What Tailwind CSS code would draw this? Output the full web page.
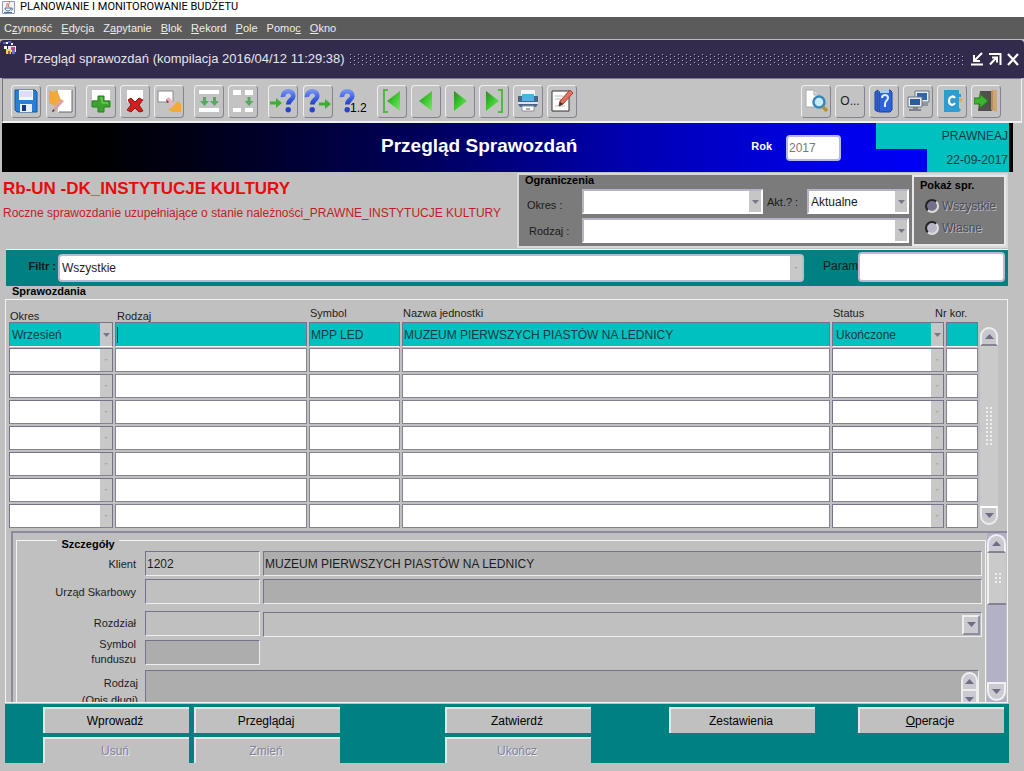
<!DOCTYPE html>
<html lang="pl">
<head>
<meta charset="utf-8">
<title>PLANOWANIE I MONITOROWANIE BUDŻETU</title>
<script src="https://cdn.jsdelivr.net/npm/@tailwindcss/browser@4"></script>
</head>
<body class="min-h-screen bg-[#c0c0c0] font-['Liberation_Sans',Arial,sans-serif] text-[12px] leading-[14px] text-[#1c1c1c]">

<!-- shared symbols -->
<svg class="absolute size-0" aria-hidden="true">
  <symbol id="down" viewBox="0 0 9 5"><path d="M0 0h9L4.5 5z" fill="currentColor"/></symbol>
  <symbol id="up" viewBox="0 0 9 5"><path d="M0 5h9L4.5 0z" fill="currentColor"/></symbol>
  <linearGradient id="blueg" gradientUnits="userSpaceOnUse" x1="0" y1="0" x2="0" y2="18"><stop offset="0" stop-color="#7f9af4"/><stop offset=".5" stop-color="#3c62e6"/><stop offset="1" stop-color="#1c33b0"/></linearGradient>
  <linearGradient id="greeng" x1="0" y1="0" x2="1" y2="1"><stop offset="0" stop-color="#2b8a22"/><stop offset=".5" stop-color="#3fc832"/><stop offset="1" stop-color="#7be866"/></linearGradient>
  <symbol id="question" viewBox="0 0 16 24"><path d="M3 8C2.500 0.500 14 0.500 13.200 7.500C12.800 11 8.300 11 8.300 15.500" fill="none" stroke="url(#blueg)" stroke-width="4.600"/><circle cx="8.200" cy="20.800" r="2.700" fill="#2844c8"/></symbol>
  <symbol id="arrow" viewBox="0 0 12 10"><path d="M0 3.500h6V0l6 5-6 5V6.500H0z" fill="#3fae34"/></symbol>
</svg>

<header>
  <div class="flex h-[17px] items-center gap-[5px] bg-white pb-[3px] pl-[2px] font-[Roboto,'Open_Sans',sans-serif] text-[11px] leading-[14px] text-black">
    <svg class="size-[13px]" viewBox="0 0 13 13"><path d="M.5 .5h12v12H.5z" fill="#f2f4f8" stroke="#8f9cb4"/><path d="M7 0c2 2-2 3 0 6M5 2c1 2-1 2 0 4" fill="none" stroke="#d6643c"/><path d="M3 7h6c0 4-6 4-6 0M9 7c3 0 2 2 0 2M2 11.500h8" fill="none" stroke="#4e7297"/></svg>
    <span class="whitespace-nowrap">PLANOWANIE I MONITOROWANIE BUDŻETU</span>
  </div>
  <nav class="flex h-[23px] items-center gap-[9px] whitespace-nowrap border-b border-[#b9b9b9] bg-[#5b5b5b] pl-1 text-[11px] text-[#ececec]">
    <a href="#">C<u>z</u>ynność</a><a href="#"><u>E</u>dycja</a><a href="#">Z<u>a</u>pytanie</a><a href="#"><u>B</u>lok</a><a href="#"><u>R</u>ekord</a><a href="#"><u>P</u>ole</a><a href="#">Pomo<u>c</u></a><a href="#"><u>O</u>kno</a>
  </nav>
  <div class="flex h-[38px] items-center rounded-t bg-[#332b4b] pl-[3px] pr-1 text-[#e6e4ee]">
    <svg class="mt-px size-[14px] self-start" viewBox="0 0 14 14"><path d="M0 1h3v2H0zM5 0h3v2H5z" fill="#4a5fe0"/><path d="M3 1h2v2H3zM8 2h2v2H8zM1 5h3v3H1z" fill="#fff"/><path d="M5 5h8v6H5z" fill="#e8e4f4"/><path d="M3 8h5v5H3z" fill="#e6df4d"/><path d="M8 6h4v3H8zM5 10h2v3H5z" fill="#c93fa0"/><path d="M9 9h3v4H9z" fill="#7a68d8"/></svg>
    <h2 class="ml-[7px] whitespace-nowrap text-[13px] leading-4">Przegląd sprawozdań (kompilacja 2016/04/12 11:29:38)</h2>
    <svg class="ml-1 h-[11px] min-w-0 flex-1" aria-hidden="true"><defs><pattern id="dots" width="8" height="4" patternUnits="userSpaceOnUse"><path d="M1 0h1v1H1zM5 2h1v1H5z" fill="#b9b4cc"/><path d="M2 1h1v1H2zM6 3h1v1H6z" fill="#15102a"/></pattern></defs><rect width="100%" height="11" fill="url(#dots)"/></svg>
    <div class="ml-[6px] flex gap-1 text-white">
      <button aria-label="Minimalizuj"><svg class="size-[14px]" viewBox="0 0 14 14" fill="none" stroke="currentColor" stroke-width="2"><path d="M12 1 5 8M4 3v6h6M1 12.500h12"/></svg></button>
      <button aria-label="Przywróć"><svg class="size-[14px]" viewBox="0 0 14 14" fill="none" stroke="currentColor" stroke-width="2"><path d="M1 2h11.500v11M2 12.500 8 6M4 5.500h5v5"/></svg></button>
      <button aria-label="Zamknij"><svg class="size-[14px]" viewBox="0 0 14 14" fill="none" stroke="currentColor" stroke-width="2.200"><path d="m2 2 10 11M12 2 2 13"/></svg></button>
    </div>
  </div>
</header>

<div class="mx-[2px] flex h-[45px] items-center border border-b-2 border-[#f0f0f0] border-l-[#77748a] border-t-[#77748a] bg-[#c3c3c3] pl-2 pr-[20px] pt-[2px]" role="toolbar">
  <div class="flex gap-[5px] *:flex *:h-[33px] *:w-[30px] *:items-center *:justify-center *:rounded-sm *:border *:border-[#eee] *:border-b-[#85838f] *:border-r-[#85838f]">
    <button aria-label="Zapisz"><svg class="size-6" viewBox="0 0 24 24"><path d="M1 1h20l2 2v20H3l-2-2z" fill="#2a7ed4" stroke="#1356a0"/><path d="M5 1h14v10H5z" fill="#f4f6fd"/><path d="M6 3h12M6 5h12M6 7h12" stroke="#c9c6e4"/><path d="M6 15h12v8H6z" fill="#e9eef6"/><path d="M8 16h4v6H8z" fill="#173c7c"/></svg></button>
    <button aria-label="Edytuj rekord"><svg class="size-6" viewBox="0 0 24 24"><path d="M9 1h14v22H9z" fill="#fff"/><path d="M23 1v22H10" fill="none" stroke="#666"/><path d="m0 1 4 2 4-2 4 10-6 6-6-3z" fill="#f2a93c"/><path d="m4 20 8-10 3 2-9 10z" fill="#dba2a4"/><path d="m4 20 2 2-3 1z" fill="#634"/></svg></button>
  </div>
  <div class="ml-[10px] flex gap-[4px] *:flex *:h-[33px] *:w-[30px] *:items-center *:justify-center *:rounded-sm *:border *:border-[#eee] *:border-b-[#85838f] *:border-r-[#85838f]">
    <button aria-label="Dodaj"><svg class="size-6" viewBox="0 0 24 24"><path d="M3 1h18v10H3z" fill="#fff"/><path d="M9 7h6v5h6v6h-6v5H9v-5H3v-6h6z" fill="#3aa52d" stroke="#2a7d22"/><path d="M11 9h2v5h6" fill="none" stroke="#7fdc6c"/></svg></button>
    <button aria-label="Usuń rekord"><svg class="size-6" viewBox="0 0 24 24"><path d="M4 1h16v12H4z" fill="#fff"/><path d="m5 11 3-2 4 4 4-4 4 2-4 5 4 6-4 1-4-4-4 4-4-2 4-5z" fill="#cf2020" stroke="#921414"/></svg></button>
    <button aria-label="Wyczyść"><svg class="size-6" viewBox="0 0 24 24"><path d="M1 2h15v11H1z" fill="#fff" stroke="#888"/><path d="m9 10 3-2 7 8-3 3z" fill="#e9b5bd"/><path d="m9 10 1 4 2-1z" fill="#735"/><path d="m14 19 7-7 3 3v8h-9l-4-3z" fill="#f0ab3c"/></svg></button>
  </div>
  <div class="ml-[10px] flex gap-[4px] *:flex *:h-[33px] *:w-[30px] *:items-center *:justify-center *:rounded-sm *:border *:border-[#eee] *:border-b-[#85838f] *:border-r-[#85838f]">
    <button aria-label="Powiel rekord"><svg class="size-6" viewBox="0 0 24 24"><path d="M2 1h20v4H2zM2 19h20v4H2z" fill="#fff"/><path d="M6 8h3v4h3l-4.500 5L3 12h3zM16 8h3v4h3l-4.500 5-4.500-5h3z" fill="#58a862"/></svg></button>
    <button aria-label="Powiel pole"><svg class="size-6" viewBox="0 0 24 24"><path d="M2 1h8v5H2zM14 1h8v5h-8zM2 19h8v4H2zM14 19h8v4h-8z" fill="#fff"/><path d="M16.500 8h3v4h3L18 17l-4.500-5h3z" fill="#58a862"/></svg></button>
  </div>
  <div class="ml-[10px] flex gap-[5px] *:flex *:h-[33px] *:w-[30px] *:items-center *:justify-center *:rounded-sm *:border *:border-[#eee] *:border-b-[#85838f] *:border-r-[#85838f]">
    <button aria-label="Wprowadź zapytanie"><svg class="h-6 w-[28px]" viewBox="0 0 28 24"><use href="#question" x="11" width="16" height="24"/><use href="#arrow" x="1" y="9" width="12" height="10"/></svg></button>
    <button aria-label="Wykonaj zapytanie"><svg class="h-6 w-[28px]" viewBox="0 0 28 24"><use href="#question" x="0" width="16" height="24"/><use href="#arrow" x="15" y="10" width="12" height="10"/></svg></button>
    <button aria-label="Policz rekordy" class="border-transparent!"><svg class="h-6 w-[28px] shrink-0 overflow-visible" viewBox="0 0 28 24"><use href="#question" x="0" width="16" height="24"/><text x="11" y="23" font-size="12">1.2</text></svg></button>
  </div>
  <div class="ml-[9px] flex gap-[4px] *:flex *:h-[33px] *:w-[30px] *:items-center *:justify-center *:rounded-sm *:border *:border-[#eee] *:border-b-[#85838f] *:border-r-[#85838f]">
    <button aria-label="Pierwszy rekord"><svg class="size-6" viewBox="0 0 24 24"><path d="M8 1H4v22h4" fill="none" stroke="#53b748" stroke-width="2"/><path d="M20 2v20L7 12z" fill="url(#greeng)"/></svg></button>
    <button aria-label="Poprzedni rekord"><svg class="size-6" viewBox="0 0 24 24"><path d="M18 2v20L5 12z" fill="url(#greeng)"/></svg></button>
    <button aria-label="Następny rekord"><svg class="size-6" viewBox="0 0 24 24"><path d="M6 2v20l13-10z" fill="url(#greeng)"/></svg></button>
    <button aria-label="Ostatni rekord"><svg class="size-6" viewBox="0 0 24 24"><path d="M16 1h4v22h-4" fill="none" stroke="#53b748" stroke-width="2"/><path d="M4 2v20l13-10z" fill="url(#greeng)"/></svg></button>
    <button aria-label="Drukuj"><svg class="size-6" viewBox="0 0 24 24"><path d="M5 1h14v6H5z" fill="#eef4fa"/><path d="M2 7h4v5h12V7h4v8l-2 3H4l-2-3z" fill="#4b6488"/><path d="M6 5h12v7H6z" fill="#49b4e4"/><path d="M2 13h20v2H2z" fill="#dce3ec"/><path d="M6 17h12v5H6z" fill="#fff" stroke="#8794a8"/><path d="M10 20h4" stroke="#555"/></svg></button>
    <button aria-label="Edytor"><svg class="size-6" viewBox="0 0 24 24"><path d="M2 2h17v20H2z" fill="#fff" stroke="#333"/><path d="M5 7h8M5 10h6M5 17h10" stroke="#bbb"/><path d="m9 17 1-5L20 1l3 3-10 11z" fill="#e2705c" stroke="#a04434"/><path d="m9 17 1-4 3 2z" fill="#333"/></svg></button>
  </div>
  <div class="ml-auto flex gap-[4px] *:flex *:h-[33px] *:w-[30px] *:items-center *:justify-center *:rounded-sm *:border *:border-[#eee] *:border-b-[#85838f] *:border-r-[#85838f]">
    <button aria-label="Podgląd"><svg class="size-6" viewBox="0 0 24 24"><path d="M2 1h8l5 5v12H2z" fill="#fff" stroke="#aaa"/><path d="M10 1v5h5" fill="#ddd" stroke="#aaa"/><circle cx="15" cy="13" r="5.500" fill="#c4ecfa" stroke="#3a86c0" stroke-width="2.500"/><path d="m19 18 4 4" stroke="#b8922c" stroke-width="3.500"/></svg></button>
    <button>O...</button>
    <button aria-label="Pomoc"><svg class="size-6" viewBox="0 0 24 24"><path d="m3 3 3-2v22l-3-2zM7 3l11-2 2 2v18l-2 2H7z" fill="#2d63d8" stroke="#1b409c"/><path d="M9 1h8M8 3h9" stroke="#a8c8f8" stroke-width="2"/><path d="M10 9c0-4 6-4 6 0 0 2-3 3-3 6v3" fill="none" stroke="#e4efff" stroke-width="2"/></svg></button>
    <button aria-label="Okna"><svg class="size-6" viewBox="0 0 24 24"><path d="M9 2h14v11H9z" fill="#e8ecef" stroke="#6c7480"/><path d="M11 4h10v7H11z" fill="#2f67a8"/><path d="M14 14h8v3h-8z" fill="#8e949c"/><path d="M2 8h14v10H2z" fill="#e8ecef" stroke="#6c7480"/><path d="M4 10h10v6H4z" fill="#2d5c9c"/><path d="M7 18h5v2H7zM3 20h12v2H3z" fill="#7d828a"/></svg></button>
    <button aria-label="Kalkulator"><svg class="size-6" viewBox="0 0 24 24"><path d="M4 1h15v4h2v3h-2v11l2 2-2 2H4z" fill="#2f9bd0"/><path d="M19 9h3v4h-3z" fill="#e0b050"/><path d="M15 9c-2-3-6-1-6 3s4 5 6 2" fill="none" stroke="#fff" stroke-width="2.200"/></svg></button>
    <button aria-label="Wyjście"><svg class="size-6" viewBox="0 0 24 24"><path d="M6 2h12v20H4z" fill="#51504d"/><path d="M17 1h6v22l-6-2z" fill="#d0a678"/><path d="M18 2v19" stroke="#9c7648"/><path d="M0 9h6V5l8 7-8 7v-4H0z" fill="#3cb52e" stroke="#257f1d"/></svg></button>
  </div>
</div>

<main>
  <section class="ml-[2px] mr-[11px] flex h-[49px] items-center whitespace-nowrap border-r-4 border-black bg-[linear-gradient(90deg,#000_0%,#000_9%,#000018_20%,#00005c_42%,#0000b0_62%,#0000e6_82%,#0000f4_90%)] pl-[379px]">
    <h1 class="mb-1 text-[19px] font-bold leading-6 text-white">Przegląd Sprawozdań</h1>
    <label for="rok" class="mb-1 ml-auto text-[11px] font-bold text-white">Rok</label>
    <input id="rok" value="2017" class="ml-[14px] h-[26px] w-[55px] rounded-sm border-2 border-[#b8b8e8] bg-white pl-px text-[12px] text-[#777]">
    <div class="ml-[35px] flex w-[133px] flex-col items-end text-right text-[#123a3c]">
      <div class="flex h-[26px] w-full items-center justify-end bg-[#00c0c0] pr-px">PRAWNEAJ</div>
      <div class="flex h-[23px] w-[82px] items-center justify-end bg-[#00c0c0] pb-[2px] pr-px">22-09-2017</div>
    </div>
  </section>

  <div class="mr-[16px] flex h-[77px]">
    <div class="min-w-0 flex-1 whitespace-nowrap pl-[3px] pt-[7px]">
      <h2 class="text-[17px] font-bold leading-5 text-[#e60c0c]">Rb-UN -DK_INSTYTUCJE KULTURY</h2>
      <p class="mt-[7px] text-[#c41c24]">Roczne sprawozdanie uzupełniające o stanie należności_PRAWNE_INSTYTUCJE KULTURY</p>
    </div>
    <div class="mt-px flex h-[75px] w-[491px] border-2 border-[#d8d8d8] bg-[#7b7b7b] text-black">
      <fieldset class="min-w-0 flex-1 pl-[6px]">
        <legend class="float-left h-[14px] w-full text-[11px] font-bold leading-[11px]">Ograniczenia</legend>
        <div class="clear-both flex items-center text-[#1a1a1a]">
          <label for="okres" class="w-[57px] pl-[2px] pt-[6px] text-[11px]">Okres :</label>
          <span class="flex h-[25px] w-[181px] border-2 border-[#b4b4c4] border-b-white border-r-white bg-white"><select id="okres" class="min-w-0 flex-1 appearance-none"><option></option></select><span class="flex w-3 items-center justify-center bg-[#c6c6c6] text-[#77778a]"><svg class="h-1 w-[7px]"><use href="#down"/></svg></span></span>
          <label for="akt" class="w-[44px] pl-1 text-[11px]">Akt.? :</label>
          <span class="flex h-[25px] w-[102px] border-2 border-[#b4b4c4] border-b-white border-r-white bg-white"><select id="akt" class="min-w-0 flex-1 appearance-none pl-[2px]"><option>Aktualne</option></select><span class="flex w-3 items-center justify-center bg-[#c6c6c6] text-[#77778a]"><svg class="h-1 w-[7px]"><use href="#down"/></svg></span></span>
        </div>
        <div class="mt-1 flex items-center text-[#1a1a1a]">
          <label for="rodz" class="w-[57px] pl-1 text-[11px]">Rodzaj :</label>
          <span class="flex h-[25px] w-[327px] border-2 border-[#b4b4c4] border-b-white border-r-white bg-white"><select id="rodz" class="min-w-0 flex-1 appearance-none"><option></option></select><span class="flex w-3 items-center justify-center bg-[#c6c6c6] text-[#77778a]"><svg class="h-1 w-[7px]"><use href="#down"/></svg></span></span>
        </div>
      </fieldset>
      <fieldset class="h-[71px] w-[94px] border-2 border-[#e8e8e8] pl-[6px] pt-px">
        <legend class="float-left w-full text-[11px] font-bold">Pokaż spr.</legend>
        <label class="clear-both ml-[5px] flex h-[22px] items-center gap-[3px] whitespace-nowrap pt-[5px] text-[#4c4c58] [text-shadow:1px_1px_0_#bcbcbc]"><input type="radio" name="spr" disabled checked class="size-[14px] shrink-0 appearance-none rounded-full border-2 border-[#222] border-b-[#ddd] border-r-[#ddd] bg-[#73708c]">Wszystkie</label>
        <label class="ml-[5px] mt-[7px] flex h-[14px] items-center gap-[3px] text-[#4c4c58] [text-shadow:1px_1px_0_#bcbcbc]"><input type="radio" name="spr" disabled class="size-[14px] shrink-0 appearance-none rounded-full border-2 border-[#222] border-b-[#ddd] border-r-[#ddd] bg-[#b9b5c6]">Własne</label>
      </fieldset>
    </div>
  </div>

  <section class="ml-[6px] mr-[16px] flex h-[37px] items-center border-t border-[#dff] bg-[#008080] pr-[3px] text-[#0c1c1c]">
    <label for="filtr" class="mb-1 w-[52px] pr-[2px] text-right text-[11px] font-bold">Filtr :</label>
    <span class="flex h-7 min-w-0 flex-1 rounded-sm border-2 border-[#b6bccb] bg-white text-[#1c1c1c]"><select id="filtr" class="min-w-0 flex-1 appearance-none pl-[2px]"><option>Wszystkie</option></select><span class="flex w-3 items-center justify-center bg-[#c8c8c8] text-[#aaa]"><svg class="h-[2px] w-1"><use href="#down"/></svg></span></span>
    <label for="param" class="mb-1 ml-[19px] w-[35px]">Param</label>
    <input id="param" class="mb-[3px] h-[30px] w-[147px] rounded-sm border-2 border-[#b6bccb] bg-white px-1">
  </section>

  <section class="ml-[5px] mr-[16px]">
    <h3 class="h-[13px] pl-[7px] text-[11px] font-bold leading-[10px] text-black">Sprawozdania</h3>
    <div class="border border-[#f2f2f2]">
      <div class="flex h-[231px] pl-[3px]">
        <table class="w-full table-fixed self-start text-left">
          <colgroup><col class="w-[106px]"><col class="w-[194px]"><col class="w-[93px]"><col><col class="w-[114px]"><col class="w-[34px]"></colgroup>
          <thead>
            <tr class="h-[22px] whitespace-nowrap align-bottom text-[11px] leading-3 [&>th]:p-0 [&>th]:font-normal">
              <th class="pl-px!">Okres</th><th class="pl-[2px]!">Rodzaj</th><th class="pb-[3px]! pl-px!">Symbol</th><th class="pb-[3px]! pl-px!">Nazwa jednostki</th><th class="pb-[3px]! pl-px!">Status</th><th class="pb-[3px]!"><span class="-ml-[11px]">Nr kor.</span></th>
            </tr>
          </thead>
          <tbody id="rows" class="[&_td]:h-[26px] [&_td]:p-0 [&_td]:pr-[2px] [&_td]:align-top">
            <tr class="text-[#153c3e]">
              <td><span class="flex h-[25px] border border-[#75738c] border-b-white bg-[#00c0c0]"><select aria-label="Okres" class="min-w-0 flex-1 appearance-none pl-[2px]"><option>Wrzesień</option></select><span class="flex w-3 items-center justify-center bg-[#c6c6c6] text-[#77778a]"><svg class="h-1 w-[7px]"><use href="#down"/></svg></span></span></td>
              <td><span class="flex h-[25px] items-center border border-[#75738c] border-b-white bg-[#00c0c0] pl-px"><span class="h-4 w-px bg-[#222]"></span><input aria-label="Rodzaj" class="h-full min-w-0 flex-1"></span></td>
              <td><input aria-label="Symbol" value="MPP LED" class="h-[25px] w-full border border-[#75738c] border-b-white bg-[#00c0c0] pl-px"></td>
              <td><input aria-label="Nazwa jednostki" value="MUZEUM PIERWSZYCH PIASTÓW NA LEDNICY" class="h-[25px] w-full border border-[#75738c] border-b-white bg-[#00c0c0] pl-px"></td>
              <td><span class="flex h-[25px] border border-[#75738c] border-b-white bg-[#00c0c0]"><select aria-label="Status" class="min-w-0 flex-1 appearance-none pl-[3px]"><option>Ukończone</option></select><span class="flex w-3 items-center justify-center bg-[#c6c6c6] text-[#77778a]"><svg class="h-1 w-[7px]"><use href="#down"/></svg></span></span></td>
              <td><input aria-label="Nr kor." class="h-[25px] w-full border border-[#75738c] border-b-white bg-[#00c0c0]"></td>
            </tr>
          </tbody>
        </table>
        <div class="mb-[6px] mr-[9px] mt-[27px] flex w-[18px] shrink-0 flex-col rounded-full bg-[#cacaca] text-[#6f6c86]">
          <button aria-label="W górę" class="flex h-[19px] items-center justify-center rounded-t-full border-2 border-[#ececf0] border-b-[#85838f] bg-[#c8c8cc]"><svg class="h-[5px] w-[9px]"><use href="#up"/></svg></button>
          <span class="my-auto h-10 w-2 self-center bg-[radial-gradient(#eee_1px,transparent_1px)] bg-[size:4px_4px]"></span>
          <button aria-label="W dół" class="flex h-[19px] items-center justify-center rounded-b-full border-2 border-[#ececf0] border-t-white bg-[#c8c8cc]"><svg class="h-[5px] w-[9px]"><use href="#down"/></svg></button>
        </div>
      </div>

      <div class="ml-[5px] flex h-[171px] overflow-hidden border-l-2 border-t-2 border-[#8d8b9b]">
        <div class="ml-[3px] mt-[7px] min-w-0 flex-1 border border-b-0 border-[#f4f4f4]">
          <fieldset>
            <legend class="float-left -mt-[4px] ml-[40px] h-[14px] w-[62px] bg-[#c0c0c0] text-center text-[11px] font-bold text-black">Szczegóły</legend>
            <div class="clear-both grid grid-cols-[119px_115px_minmax(0,1fr)] items-center gap-x-[3px] pl-[6px] pr-[3px] [&_input]:h-[25px] [&_input]:w-full [&_input]:border [&_input]:border-[#eee] [&_input]:border-l-[#75738c] [&_input]:border-t-[#75738c] [&_input]:pl-px [&_label]:pr-[6px] [&_label]:text-right [&_label]:text-[11px]">
              <label for="klient">Klient</label><input id="klient" value="1202"><input aria-label="Nazwa klienta" value="MUZEUM PIERWSZYCH PIASTÓW NA LEDNICY" class="bg-[#adadad]">
              <label for="urzad" class="mt-[3px]">Urząd Skarbowy</label><input id="urzad" class="mt-[3px]"><input aria-label="Nazwa urzędu" class="mt-[3px] bg-[#adadad]">
              <label for="rozdzial" class="mt-[5px]">Rozdział</label><input id="rozdzial" class="mt-[5px]">
              <span class="mt-2 flex h-[25px] items-center border border-[#eee] border-l-[#75738c] border-t-[#75738c] pr-px"><select aria-label="Nazwa rozdziału" class="h-full min-w-0 flex-1 appearance-none"><option></option></select><span class="flex h-[20px] w-[18px] items-center justify-center border-2 border-[#eee] border-b-[#8f8d9f] border-r-[#8f8d9f] bg-[#cacad0] text-[#6f6c86]"><svg class="h-[5px] w-[9px]"><use href="#down"/></svg></span></span>
              <label for="symf" class="leading-[15px]">Symbol<br>funduszu</label><input id="symf" class="bg-[#adadad]"><span></span>
              <label for="opis" class="mt-[3px] h-[50px] self-start pr-[4px]! pt-[5px] leading-[17px]">Rodzaj<br>(Opis długi)</label>
              <div class="col-span-2 mr-[3px] mt-[3px] flex h-[50px] self-start border border-[#75738c] border-r-[#eee] bg-[#adadad]"><textarea id="opis" class="h-full min-w-0 flex-1 resize-none"></textarea>
                <div class="flex w-[17px] flex-col pt-px text-[#6f6c86]"><button aria-label="Przewiń w górę" class="flex h-[19px] items-center justify-center rounded-t-full border-2 border-[#eee] bg-[#cacad0]"><svg class="h-[5px] w-[9px]"><use href="#up"/></svg></button><button aria-label="Przewiń w dół" class="flex h-[18px] items-center justify-center border-2 border-t-0 border-[#eee] bg-[#cacad0]"><svg class="h-[5px] w-[9px]"><use href="#down"/></svg></button></div>
              </div>
            </div>
          </fieldset>
        </div>
        <div class="ml-px mr-px flex w-[19px] shrink-0 flex-col bg-[#b3b1c6] pt-px text-[#6f6c86]">
          <button aria-label="Szczegóły w górę" class="flex h-[19px] items-center justify-center rounded-t-full border-2 border-[#f0f0f4] border-b-[#85838f] bg-[#cacad0]"><svg class="h-[5px] w-[9px]"><use href="#up"/></svg></button>
          <span class="flex h-[52px] items-center justify-center border-b-2 border-l-2 border-[#85838f] border-l-[#f0f0f0] bg-[#cacaca]"><span class="h-3 w-2 bg-[radial-gradient(#eee_1px,transparent_1px)] bg-[size:4px_4px]"></span></span>
          <button aria-label="Szczegóły w dół" class="mb-px mt-auto flex h-[19px] items-center justify-center rounded-b-full border-2 border-[#f0f0f4] bg-[#cacad0]"><svg class="h-[5px] w-[9px]"><use href="#down"/></svg></button>
        </div>
      </div>
    </div>
  </section>

  <footer class="ml-[5px] mr-[15px] mt-px flex h-[59px] bg-[#008080] pl-[38px] pr-[5px] pt-[3px] text-black">
    <div class="grid w-[297px] grid-cols-2 grid-rows-[26px_26px] gap-x-[5px] gap-y-1 *:border-l-2 *:border-t-2 *:border-[#e6e6e6] *:bg-[#c0c0c0] *:pr-1">
      <button>Wprowadź</button><button>Przeglądaj</button>
      <button disabled class="text-[#8482a0] [text-shadow:1px_1px_0_#eee]">Usuń</button><button disabled class="text-[#8482a0] [text-shadow:1px_1px_0_#eee]">Zmień</button>
    </div>
    <span class="flex-[105]"></span>
    <div class="grid w-[146px] grid-rows-[26px_26px] gap-y-1 *:border-l-2 *:border-t-2 *:border-[#e6e6e6] *:bg-[#c0c0c0] *:pr-1">
      <button>Zatwierdź</button><button disabled class="text-[#8482a0] [text-shadow:1px_1px_0_#eee]">Ukończ</button>
    </div>
    <span class="flex-[78]"></span>
    <button class="h-[26px] w-[146px] border-l-2 border-t-2 border-[#e6e6e6] bg-[#c0c0c0] pr-1">Zestawienia</button>
    <span class="flex-[43]"></span>
    <button class="h-[26px] w-[146px] border-l-2 border-t-2 border-[#e6e6e6] bg-[#c0c0c0] pr-1"><u>O</u>peracje</button>
  </footer>
</main>

<template id="empty">
  <tr>
    <td><span class="flex h-[24px] border border-[#75738c] border-b-[#85838f] bg-white"><select aria-label="Okres" class="min-w-0 flex-1 appearance-none"><option></option></select><span class="flex w-3 items-center justify-center bg-[#c8c8c8] text-[#aaa]"><svg class="h-[2px] w-1"><use href="#down"/></svg></span></span></td>
    <td><input aria-label="Rodzaj" class="h-[24px] w-full border border-[#85838f] bg-white"></td>
    <td><input aria-label="Symbol" class="h-[24px] w-full border border-[#85838f] bg-white"></td>
    <td><input aria-label="Nazwa jednostki" class="h-[24px] w-full border border-[#85838f] bg-white"></td>
    <td><span class="flex h-[24px] border border-[#75738c] border-b-[#85838f] bg-white"><select aria-label="Status" class="min-w-0 flex-1 appearance-none"><option></option></select><span class="flex w-3 items-center justify-center bg-[#c8c8c8] text-[#aaa]"><svg class="h-[2px] w-1"><use href="#down"/></svg></span></span></td>
    <td><input aria-label="Nr kor." class="h-[24px] w-full border border-[#85838f] bg-white"></td>
  </tr>
</template>
<script>
  const rows = document.getElementById('rows');
  const empty = document.getElementById('empty');
  for (let i = 0; i < 7; i++) rows.append(empty.content.cloneNode(true));
</script>
</body>
</html>
